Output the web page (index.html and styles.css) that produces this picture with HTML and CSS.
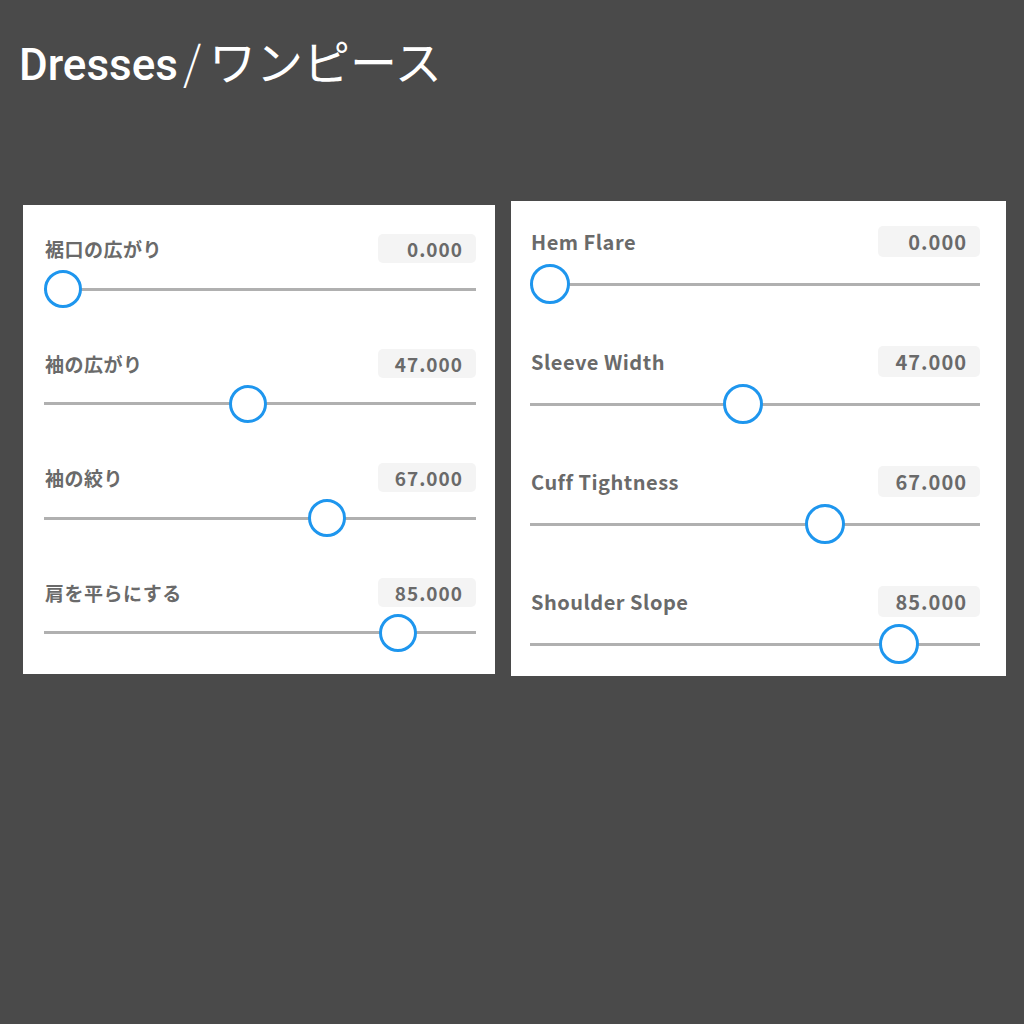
FILE: index.html
```html
<!DOCTYPE html>
<html lang="ja">
<head>
<meta charset="utf-8">
<title>Dresses</title>
<link rel="stylesheet" href="styles.css">
</head>
<body>
<div class="page">
  <h1 class="title">Dresses<span class="slash">/</span><span class="kana">ワンピース</span></h1>
  <div class="panels">
    <section class="panel panel-ja">
      <div class="row">
        <div class="head"><span class="label">裾口の広がり</span><span class="value">0.000</span></div>
        <div class="slider"><span class="knob" style="--v:0"></span></div>
      </div>
      <div class="row">
        <div class="head"><span class="label">袖の広がり</span><span class="value">47.000</span></div>
        <div class="slider"><span class="knob" style="--v:0.47"></span></div>
      </div>
      <div class="row">
        <div class="head"><span class="label">袖の絞り</span><span class="value">67.000</span></div>
        <div class="slider"><span class="knob" style="--v:0.67"></span></div>
      </div>
      <div class="row">
        <div class="head"><span class="label">肩を平らにする</span><span class="value">85.000</span></div>
        <div class="slider"><span class="knob" style="--v:0.85"></span></div>
      </div>
    </section>
    <section class="panel panel-en">
      <div class="row">
        <div class="head"><span class="label">Hem Flare</span><span class="value">0.000</span></div>
        <div class="slider"><span class="knob" style="--v:0"></span></div>
      </div>
      <div class="row">
        <div class="head"><span class="label">Sleeve Width</span><span class="value">47.000</span></div>
        <div class="slider"><span class="knob" style="--v:0.47"></span></div>
      </div>
      <div class="row">
        <div class="head"><span class="label">Cuff Tightness</span><span class="value">67.000</span></div>
        <div class="slider"><span class="knob" style="--v:0.67"></span></div>
      </div>
      <div class="row">
        <div class="head"><span class="label">Shoulder Slope</span><span class="value">85.000</span></div>
        <div class="slider"><span class="knob" style="--v:0.85"></span></div>
      </div>
    </section>
  </div>
</div>
</body>
</html>
```

FILE: styles.css
```css
html, body {
  margin: 0;
  padding: 0;
  background: #4a4a4a;
}

body {
  width: 1024px;
  height: 1024px;
  overflow: hidden;
  font-family: "Noto Sans CJK JP", "Noto Sans", sans-serif;
}

.page {
  padding: 38px 0 0 0;
}

.title {
  margin: 0 0 0 19px;
  height: 44px;
  font-family: Roboto, "Noto Sans CJK JP", sans-serif;
  font-size: 44px;
  line-height: 44px;
  font-weight: 500;
  color: #ffffff;
  white-space: nowrap;
}

.slash {
  font-family: "Noto Sans CJK JP", sans-serif;
  font-weight: 300;
  font-size: 46px;
  margin: 0 8px 0 5px;
}

.kana {
  font-family: "Noto Sans CJK JP", sans-serif;
  font-size: 47px;
  font-weight: 400;
}

.panels {
  display: flex;
  align-items: flex-start;
  gap: 16px;
  margin-top: 119px;
  padding-left: 23px;
}

.panel {
  background: #ffffff;
  box-sizing: border-box;
  display: flex;
  flex-direction: column;
}

.panel-ja {
  --head-h: 29px;
  --box-w: 98px;
  --knob: 38px;
  --label-size: 19px;
  --value-size: 19px;
  width: 472px;
  height: 469px;
  margin-top: 4px;
  padding: 29px 19px 22px 21px;
  gap: 40.5px;
}

.panel-en {
  --head-h: 31px;
  --box-w: 102px;
  --knob: 40px;
  --label-size: 20px;
  --value-size: 20px;
  width: 495px;
  height: 475px;
  padding: 25px 26px 13px 19px;
  gap: 42px;
}

.row {
  display: flex;
  flex-direction: column;
  gap: 7px;
}

.head {
  height: var(--head-h);
  display: flex;
  align-items: center;
  justify-content: space-between;
}

.label {
  font-size: var(--label-size);
  font-weight: 700;
  color: #6a6a6a;
  letter-spacing: 0.5px;
  line-height: 1;
  padding-left: 1px;
}

.value {
  box-sizing: border-box;
  width: var(--box-w);
  height: var(--head-h);
  display: flex;
  align-items: center;
  justify-content: flex-end;
  padding-right: 13px;
  background: #f4f4f4;
  border-radius: 5px;
  font-size: var(--value-size);
  font-weight: 700;
  color: #6a6a6a;
  letter-spacing: 1px;
  line-height: 1;
}

.slider {
  position: relative;
  height: var(--knob);
}

.slider::before {
  content: "";
  position: absolute;
  left: 0;
  right: 0;
  top: calc(50% - 1.5px);
  height: 3px;
  background: #b0b0b0;
}

.knob {
  position: absolute;
  top: 0;
  left: calc(var(--v) * (100% - var(--knob)));
  width: var(--knob);
  height: var(--knob);
  box-sizing: border-box;
  border: 3px solid #1e96ee;
  border-radius: 50%;
  background: #ffffff;
}
```
